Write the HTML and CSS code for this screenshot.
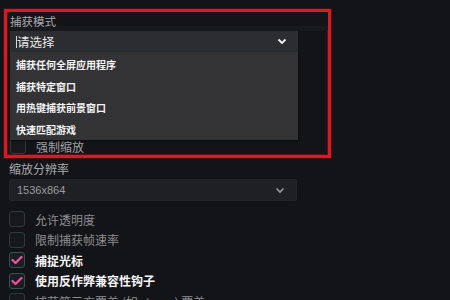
FILE: index.html
```html
<!DOCTYPE html>
<html lang="zh-CN">
<head>
<meta charset="utf-8">
<link rel="stylesheet" href="styles.css">
</head>
<body>
<div class="panel">
  <div class="highlight">
    <div class="label label-mode">捕获模式</div>
    <div class="select select-open">
      <span class="caret"></span><span class="select-text">请选择</span>
      <svg class="chev" width="10" height="7" viewBox="0 0 10 7"><path d="M1.5 1.5 L5 5 L8.5 1.5" fill="none" stroke="#f2f2f2" stroke-width="1.8"/></svg>
      <ul class="menu">
        <li>捕获任何全屏应用程序</li>
        <li>捕获特定窗口</li>
        <li>用热键捕获前景窗口</li>
        <li>快速匹配游戏</li>
      </ul>
    </div>
    <div class="row row-force">
      <span class="box"></span><span class="txt">强制缩放</span>
    </div>
  </div>
  <div class="label label-res">缩放分辨率</div>
  <div class="select select-res">
    <span class="select-text res-text">1536x864</span>
    <svg class="chev" width="10" height="7" viewBox="0 0 10 7"><path d="M1.5 1.5 L5 5 L8.5 1.5" fill="none" stroke="#9a9a9a" stroke-width="1.6"/></svg>
  </div>
  <div class="checks">
    <div class="row"><span class="box"></span><span class="txt">允许透明度</span></div>
    <div class="row"><span class="box"></span><span class="txt">限制捕获帧速率</span></div>
    <div class="row on"><span class="box"><svg width="12" height="10" viewBox="0 0 12 10"><path d="M1.5 5 L4.5 8 L10.5 2" fill="none" stroke="#e8529c" stroke-width="2.4" stroke-linecap="round" stroke-linejoin="round"/></svg></span><span class="txt">捕捉光标</span></div>
    <div class="row on"><span class="box"><svg width="12" height="10" viewBox="0 0 12 10"><path d="M1.5 5 L4.5 8 L10.5 2" fill="none" stroke="#e8529c" stroke-width="2.4" stroke-linecap="round" stroke-linejoin="round"/></svg></span><span class="txt">使用反作弊兼容性钩子</span></div>
    <div class="row"><span class="box"></span><span class="txt">捕获第三方覆盖 (如 steam) 覆盖</span></div>
  </div>
</div>
</body>
</html>
```

FILE: styles.css
```css
html, body {
  margin: 0;
  padding: 0;
  background: #131418;
  width: 450px;
  height: 300px;
  overflow: hidden;
  font-family: "Noto Sans CJK SC", "Noto Sans", "Liberation Sans", sans-serif;
}

.panel {
  padding: 0 0 0 9px;
  display: flex;
  flex-direction: column;
}

.highlight {
  margin: 9px 0 0 -5px;
  width: 318px;
  border: 3px solid #d21d26;
  box-shadow: 0 0 0 1px #4a0c10, inset 0 0 0 1px #5a1014;
  padding: 0 0 1px 3px;
  display: flex;
  flex-direction: column;
}

.label {
  color: #a9a9ab;
  font-size: 12px;
  line-height: 19px;
  height: 19px;
}

.label-mode {
  font-size: 11.5px;
  background: linear-gradient(#131418 0 14px, #18191d 14px);
}

.select {
  position: relative;
  width: 288px;
  height: 21px;
  box-sizing: border-box;
  display: flex;
  align-items: center;
  padding: 0 6px;
}

.select-open {
  background: #2c2d31;
}

.caret {
  width: 1px;
  height: 12px;
  background: #d8d8d8;
  margin-right: 0;
}

.select-text {
  color: #e6e6e6;
  font-size: 12.5px;
  line-height: 21px;
  flex: 1;
}

.chev {
  margin-right: 5px;
}

.menu {
  position: absolute;
  left: 0;
  top: 21px;
  width: 288px;
  margin: 0;
  padding: 2px 0 0 0;
  list-style: none;
  background: #333336;
  box-sizing: border-box;
  box-shadow: 0 1px 2px rgba(0,0,0,0.5);
  z-index: 2;
}

.menu li {
  height: 21.5px;
  line-height: 21.5px;
  padding-left: 6px;
  color: #f4f4f4;
  font-size: 10px;
  font-weight: bold;
}

.row {
  display: flex;
  align-items: center;
  height: 20.5px;
}

.row-force {
  margin-top: 86px;
  height: 16px;
}

.box {
  width: 16px;
  height: 16px;
  box-sizing: border-box;
  border: 1px solid #2b3a3b;
  border-radius: 3px;
  background: #16181b;
  display: flex;
  align-items: center;
  justify-content: center;
  flex: none;
}

.txt {
  margin-left: 10px;
  color: #8d8d90;
  font-size: 12px;
  white-space: nowrap;
}

.row-force .txt {
  color: #a0a0a2;
}

.row.on .box {
  border-color: #34504f;
  background: #1b1d21;
}

.row.on .txt {
  color: #f6f6f6;
  font-weight: bold;
}

.label-res {
  margin-top: 1px;
  height: 20px;
  line-height: 20px;
}

.select-res {
  height: 22px;
  background: #1f2024;
  border: 1px solid #232428;
  border-radius: 2px;
  padding-left: 7px;
}

.res-text {
  color: #9c9c9e;
  font-family: "Liberation Sans", sans-serif;
  font-size: 11px;
}

.checks {
  margin-top: 8px;
  display: flex;
  flex-direction: column;
}
```
